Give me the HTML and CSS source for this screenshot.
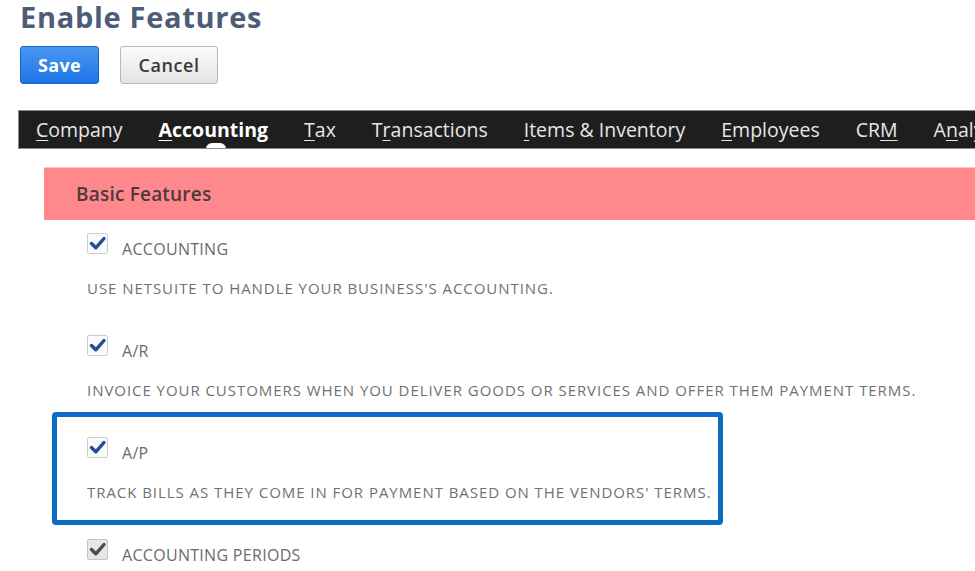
FILE: index.html
```html
<!DOCTYPE html>
<html>
<head>
<meta charset="utf-8">
<link rel="stylesheet" href="styles.css">
</head>
<body>
<div class="page">
  <h1 class="title">Enable Features</h1>
  <div class="actions">
    <button class="btn btn-primary">Save</button>
    <button class="btn btn-secondary">Cancel</button>
  </div>
  <nav class="tabs">
    <span class="tab"><u>C</u>ompany</span>
    <span class="tab tab-active"><u>A</u>ccounting</span>
    <span class="tab"><u>T</u>ax</span>
    <span class="tab">T<u>r</u>ansactions</span>
    <span class="tab"><u>I</u>tems &amp; Inventory</span>
    <span class="tab"><u>E</u>mployees</span>
    <span class="tab">CR<u>M</u></span>
    <span class="tab">A<u>n</u>alytics</span>
  </nav>
  <section class="section">
    <div class="section-header">Basic Features</div>
    <div class="features">
      <div class="feature">
        <div class="feature-head">
          <svg class="checkbox" viewBox="0 0 21 21" width="21" height="21"><rect class="cb-box" x="0.5" y="0.5" width="20" height="20" rx="1.5"/><path class="cb-check" d="M4.5 10.5 L8.8 14.8 L17 5.5"/></svg>
          <span class="feature-label">ACCOUNTING</span>
        </div>
        <div class="feature-desc">USE NETSUITE TO HANDLE YOUR BUSINESS'S ACCOUNTING.</div>
      </div>
      <div class="feature">
        <div class="feature-head">
          <svg class="checkbox" viewBox="0 0 21 21" width="21" height="21"><rect class="cb-box" x="0.5" y="0.5" width="20" height="20" rx="1.5"/><path class="cb-check" d="M4.5 10.5 L8.8 14.8 L17 5.5"/></svg>
          <span class="feature-label">A/R</span>
        </div>
        <div class="feature-desc">INVOICE YOUR CUSTOMERS WHEN YOU DELIVER GOODS OR SERVICES AND OFFER THEM PAYMENT TERMS.</div>
      </div>
      <div class="feature">
        <div class="highlight-box"></div>
        <div class="feature-head">
          <svg class="checkbox" viewBox="0 0 21 21" width="21" height="21"><rect class="cb-box" x="0.5" y="0.5" width="20" height="20" rx="1.5"/><path class="cb-check" d="M4.5 10.5 L8.8 14.8 L17 5.5"/></svg>
          <span class="feature-label">A/P</span>
        </div>
        <div class="feature-desc">TRACK BILLS AS THEY COME IN FOR PAYMENT BASED ON THE VENDORS' TERMS.</div>
      </div>
      <div class="feature">
        <div class="feature-head">
          <svg class="checkbox checkbox-disabled" viewBox="0 0 21 21" width="21" height="21"><rect class="cb-box" x="0.5" y="0.5" width="20" height="20" rx="1.5"/><path class="cb-check" d="M4.5 10.5 L8.8 14.8 L17 5.5"/></svg>
          <span class="feature-label">ACCOUNTING PERIODS</span>
        </div>
      </div>
    </div>
  </section>
</div>
</body>
</html>
```

FILE: styles.css
```css
* { box-sizing: border-box; }

html, body {
  margin: 0;
  padding: 0;
  background: #ffffff;
  overflow: hidden;
}

body {
  font-family: "Open Sans", "Liberation Sans", sans-serif;
  width: 975px;
  height: 571px;
}

.page {
  padding-left: 20px;
}

.title {
  margin: 0;
  font-size: 29px;
  line-height: 34px;
  font-weight: 700;
  letter-spacing: 0.7px;
  color: #4d5d77;
}

.actions {
  display: flex;
  gap: 21px;
  margin-top: 12px;
}

.btn {
  height: 38px;
  border-radius: 3px;
  font-family: "Open Sans", "Liberation Sans", sans-serif;
  font-size: 18px;
  font-weight: 700;
  padding: 0;
  cursor: pointer;
}

.btn-primary {
  width: 79px;
  color: #ffffff;
  background: linear-gradient(#4a97f2, #1c74e4);
  border: 1px solid #1a66c8;
  letter-spacing: 0.3px;
}

.btn-secondary {
  width: 98px;
  color: #3a3a3a;
  font-weight: 600;
  letter-spacing: 0.6px;
  background: linear-gradient(#fbfbfb, #e4e4e4);
  border: 1px solid #b9b9b9;
}

.tabs {
  margin-top: 26px;
  margin-left: -2px;
  height: 39px;
  background: #1e1e1e;
  border: 1px solid #8a8a8a;
  border-right: none;
  display: flex;
  align-items: center;
  gap: 36px;
  padding-left: 17px;
  white-space: nowrap;
  overflow: hidden;
}

.tab {
  position: relative;
  font-size: 19.5px;
  line-height: 37px;
  color: #e6e6e6;
}

.tab u {
  text-decoration-thickness: 1px;
  text-underline-offset: 3px;
}

.tab-active {
  font-weight: 700;
  color: #ffffff;
}

.tab-active::after {
  content: "";
  position: absolute;
  left: 47px;
  bottom: -1px;
  width: 20px;
  height: 6px;
  background: #ffffff;
  border-radius: 10px 10px 0 0;
}

.section {
  margin-left: 24px;
  margin-top: 18px;
}

.section-header {
  height: 53px;
  background: #ff888d;
  border-top: 1px solid #ffc4c6;
  padding-left: 32px;
  font-size: 19px;
  font-weight: 600;
  line-height: 52px;
  letter-spacing: 0.2px;
  color: #4c3a3c;
}

.features {
  padding-top: 17px;
  padding-left: 43px;
}

.feature {
  position: relative;
}

.feature-head {
  display: flex;
  align-items: center;
  gap: 14px;
  height: 24px;
  margin-bottom: 17px;
}

.checkbox {
  flex: none;
  align-self: flex-start;
  margin-top: -4px;
}

.cb-box {
  fill: #fafafa;
  stroke: #cdcdcd;
  stroke-width: 1;
}

.cb-check {
  fill: none;
  stroke: #1e4f96;
  stroke-width: 3.4;
  stroke-linecap: round;
  stroke-linejoin: round;
}

.checkbox-disabled .cb-box {
  fill: #e6e6e6;
  stroke: #c4c4c4;
}

.checkbox-disabled .cb-check {
  stroke: #4a4a4a;
}

.feature-label {
  font-size: 16px;
  line-height: 24px;
  letter-spacing: 0.3px;
  color: #6b6b6b;
}

.feature-desc {
  font-size: 15px;
  line-height: 20px;
  color: #717171;
  margin-bottom: 41px;
  letter-spacing: 0.95px;
}

.highlight-box {
  position: absolute;
  left: -35px;
  top: -29px;
  width: 671px;
  height: 113px;
  border: 5px solid #0a6cc2;
  border-radius: 4px;
  pointer-events: none;
}
```
